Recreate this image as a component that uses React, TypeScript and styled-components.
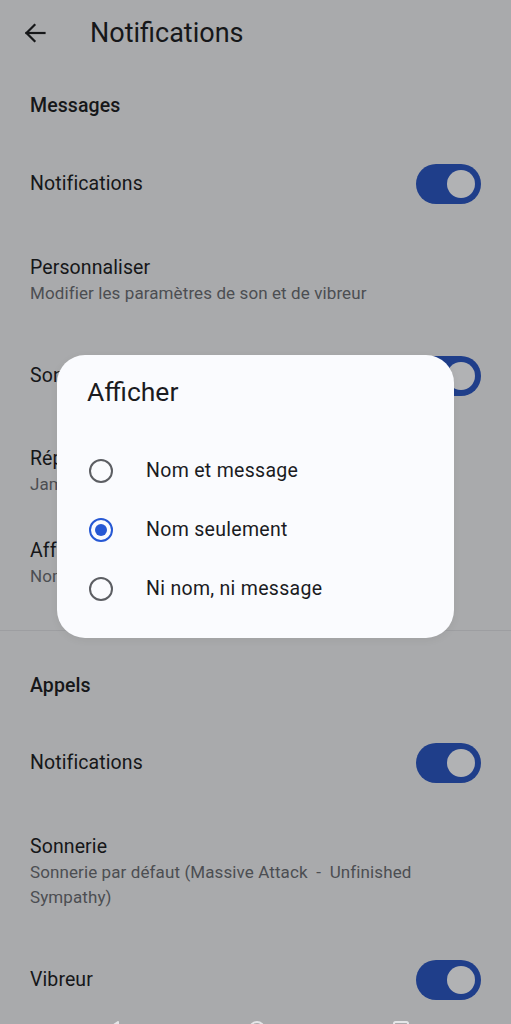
import React from "react";
import styled, { createGlobalStyle } from "styled-components";

const Global = createGlobalStyle`
  html, body { margin: 0; padding: 0; background: #a9aaac; }
  body { font-family: Roboto, "Noto Sans", "Liberation Sans", sans-serif; -webkit-font-smoothing: antialiased; }
  * { box-sizing: border-box; }
`;

const Screen = styled.div`
  position: relative;
  width: 511px;
  height: 1024px;
  overflow: hidden;
  background: #a9aaac;
  color: #161719;
`;

const Header = styled.header`
  display: flex;
  align-items: center;
  height: 65px;
  padding: 1px 0 0 24px;
`;

const BackIcon = styled.svg`
  width: 22px;
  height: 22px;
  flex: none;
`;

const Title = styled.h1`
  margin: 0 0 0 44px;
  font-size: 27px;
  font-weight: 400;
  line-height: 32px;
  color: #161719;
`;

const SectionTitle = styled.div<{ $top: number; $h: number }>`
  height: ${(p) => p.$h}px;
  padding: ${(p) => p.$top}px 30px 0;
  font-size: 19.5px;
  font-weight: 500;
  letter-spacing: 0.1px;
  line-height: 26px;
  color: #161719;
`;

const Row = styled.div<{ $h: number }>`
  display: flex;
  align-items: center;
  justify-content: space-between;
  height: ${(p) => p.$h}px;
  padding: 0 30px;
`;

const TextCol = styled.div`
  display: flex;
  flex-direction: column;
`;

const RowTitle = styled.div`
  font-size: 19.5px;
  line-height: 26px;
  letter-spacing: 0.1px;
  color: #161719;
`;

const RowSub = styled.div`
  font-size: 17px;
  line-height: 25px;
  letter-spacing: 0.1px;
  color: #4c4e52;
  max-width: 400px;
`;

const Track = styled.div`
  position: relative;
  flex: none;
  width: 65px;
  height: 40px;
  border-radius: 20px;
  background: #1f3e8a;
`;

const Thumb = styled.div`
  position: absolute;
  top: 6px;
  right: 6px;
  width: 28px;
  height: 28px;
  border-radius: 50%;
  background: #b1b2b4;
`;

const Divider = styled.hr`
  margin: 30px 0 0;
  border: 0;
  height: 1px;
  background: #9d9ea1;
`;

const NavBar = styled.nav`
  display: flex;
  align-items: flex-start;
  gap: 128px;
  padding: 1px 0 0 105px;
  height: 40px;
`;

const NavIcon = styled.svg`
  width: 16px;
  height: 16px;
  flex: none;
`;

const Dialog = styled.div`
  position: absolute;
  left: 57px;
  top: 355px;
  width: 397px;
  height: 283px;
  border-radius: 28px;
  background: #fafbfe;
  padding: 21px 30px 19px 32px;
  box-shadow: 0 2px 8px rgba(0, 0, 0, 0.06);
`;

const DialogTitle = styled.div`
  font-size: 26.5px;
  line-height: 32px;
  color: #1b1b1f;
  margin-left: -2px;
`;

const Options = styled.div`
  display: flex;
  flex-direction: column;
  margin-top: 33px;
`;

const Option = styled.label`
  display: flex;
  align-items: center;
  height: 59px;
  gap: 33px;
  cursor: pointer;
`;

const Radio = styled.span<{ $checked: boolean }>`
  display: flex;
  align-items: center;
  justify-content: center;
  flex: none;
  width: 24px;
  height: 24px;
  border-radius: 50%;
  border: 2.5px solid ${(p) => (p.$checked ? "#2658d4" : "#5c5e63")};
  &::after {
    content: "";
    display: ${(p) => (p.$checked ? "block" : "none")};
    width: 12px;
    height: 12px;
    border-radius: 50%;
    background: #2658d4;
  }
`;

const OptionLabel = styled.span`
  font-size: 19.5px;
  line-height: 26px;
  letter-spacing: 0.3px;
  color: #1b1b1f;
`;

const Toggle = () => (
  <Track>
    <Thumb />
  </Track>
);

export default function App() {
  const options = ["Nom et message", "Nom seulement", "Ni nom, ni message"];
  return (
    <>
      <Global />
      <Screen>
        <Header>
          <BackIcon viewBox="0 0 22 22" fill="none" stroke="#161719" strokeWidth="2.2" strokeLinecap="square">
            <path d="M20.5 11H2.5" />
            <path d="M10.5 3L2.5 11L10.5 19" strokeLinejoin="miter" />
          </BackIcon>
          <Title>Notifications</Title>
        </Header>

        <SectionTitle $top={28} $h={79}>Messages</SectionTitle>
        <Row $h={80}>
          <RowTitle>Notifications</RowTitle>
          <Toggle />
        </Row>
        <Row $h={112}>
          <TextCol>
            <RowTitle>Personnaliser</RowTitle>
            <RowSub>Modifier les paramètres de son et de vibreur</RowSub>
          </TextCol>
        </Row>
        <Row $h={80}>
          <RowTitle>Sons pendant la conversation</RowTitle>
          <Toggle />
        </Row>
        <Row $h={110}>
          <TextCol>
            <RowTitle>Répéter les alertes</RowTitle>
            <RowSub>Jamais</RowSub>
          </TextCol>
        </Row>
        <Row $h={74}>
          <TextCol>
            <RowTitle>Afficher</RowTitle>
            <RowSub>Nom seulement</RowSub>
          </TextCol>
        </Row>
        <Divider />

        <SectionTitle $top={42} $h={92}>Appels</SectionTitle>
        <Row $h={80}>
          <RowTitle>Notifications</RowTitle>
          <Toggle />
        </Row>
        <Row $h={137}>
          <TextCol>
            <RowTitle>Sonnerie</RowTitle>
            <RowSub>Sonnerie par défaut (Massive Attack &nbsp;-&nbsp; Unfinished Sympathy)</RowSub>
          </TextCol>
        </Row>
        <Row $h={80}>
          <RowTitle>Vibreur</RowTitle>
          <Toggle />
        </Row>

        <NavBar>
          <NavIcon viewBox="0 0 16 16">
            <path d="M13 1L3 8L13 15Z" fill="none" stroke="#e4e5e7" strokeWidth="2" strokeLinejoin="round" />
          </NavIcon>
          <NavIcon viewBox="0 0 16 16">
            <circle cx="8" cy="8" r="7" fill="none" stroke="#e4e5e7" strokeWidth="2" />
          </NavIcon>
          <NavIcon viewBox="0 0 16 16">
            <rect x="1" y="1" width="14" height="14" rx="1.5" fill="none" stroke="#e4e5e7" strokeWidth="2" />
          </NavIcon>
        </NavBar>

        <Dialog role="dialog" aria-label="Afficher">
          <DialogTitle>Afficher</DialogTitle>
          <Options>
            {options.map((o, i) => (
              <Option key={o}>
                <Radio $checked={i === 1} />
                <OptionLabel>{o}</OptionLabel>
              </Option>
            ))}
          </Options>
        </Dialog>
      </Screen>
    </>
  );
}
